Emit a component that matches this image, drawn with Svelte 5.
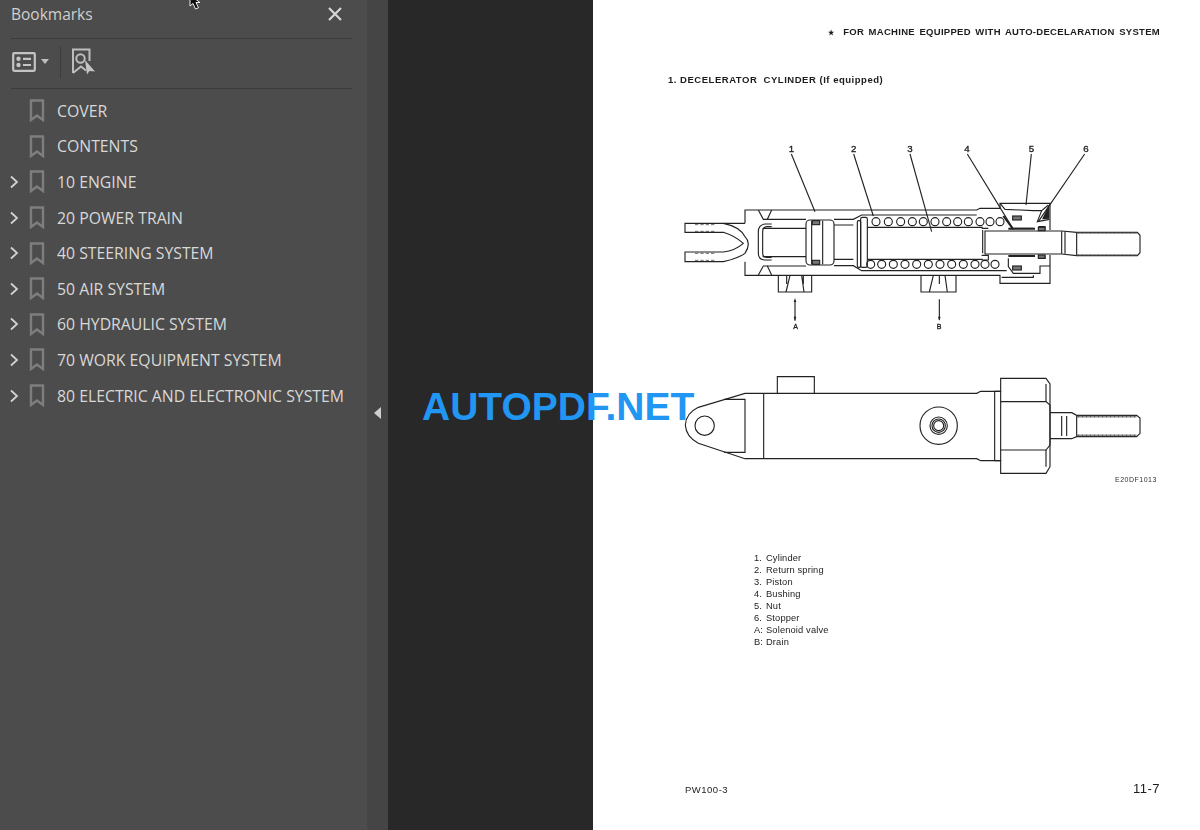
<script lang="ts">
	const bookmarks = [
		{ label: 'COVER', kids: false },
		{ label: 'CONTENTS', kids: false },
		{ label: '10 ENGINE', kids: true },
		{ label: '20 POWER TRAIN', kids: true },
		{ label: '40 STEERING SYSTEM', kids: true },
		{ label: '50 AIR SYSTEM', kids: true },
		{ label: '60 HYDRAULIC SYSTEM', kids: true },
		{ label: '70 WORK EQUIPMENT SYSTEM', kids: true },
		{ label: '80 ELECTRIC AND ELECTRONIC SYSTEM', kids: true }
	];

	const legend = [
		['1.', 'Cylinder'],
		['2.', 'Return spring'],
		['3.', 'Piston'],
		['4.', 'Bushing'],
		['5.', 'Nut'],
		['6.', 'Stopper'],
		['A:', 'Solenoid valve'],
		['B:', 'Drain']
	];

	// spring coils, in the drawing's own units (3 per screen pixel)
	const topCoils = [648, 685, 722, 757, 790, 825, 860, 893, 925, 960, 990, 1020];
	const bottomCoils = [632, 665, 700, 735, 770, 805, 840, 875, 910, 945, 975, 1005];

	const leaders = [
		{ n: '1', tx: 386, x1: 394, x2: 465, y2: 245 },
		{ n: '2', tx: 573, x1: 581, x2: 640, y2: 258 },
		{ n: '3', tx: 742, x1: 750, x2: 815, y2: 305 },
		{ n: '4', tx: 913, x1: 922, x2: 1060, y2: 298 },
		{ n: '5', tx: 1106, x1: 1114, x2: 1098, y2: 225 },
		{ n: '6', tx: 1270, x1: 1274, x2: 1135, y2: 275 }
	];
</script>

<div class="viewer">
	<aside class="panel">
		<header class="panel-head">
			<span class="panel-title">Bookmarks</span>
			<svg class="close" width="16" height="16" viewBox="0 0 16 16" aria-label="Close">
				<path d="M2 2 14 14M14 2 2 14" />
			</svg>
		</header>

		<div class="tools">
			<svg class="options" width="24" height="20" viewBox="0 0 24 20">
				<rect x="1.200" y="1.200" width="21.600" height="17.600" rx="1" />
				<circle cx="6.500" cy="6.800" r="2.200" class="fill" />
				<circle cx="6.500" cy="13" r="2.200" class="fill" />
				<path d="M11 6.800h8M11 13h8" />
			</svg>
			<span class="caret"></span>
			<span class="tool-sep"></span>
			<svg class="new-mark" width="26" height="28" viewBox="0 0 26 28">
				<path d="M2 25V1.500h16.500V13" />
				<path d="M2 25l8-6.500 5 4" />
				<circle cx="9.500" cy="10.500" r="4.200" />
				<path class="fill" d="M14 12 24 23.500 18.500 23 16 26.500z" />
			</svg>
		</div>

		<ul class="tree">
			{#each bookmarks as b}
				<li>
					<span class="twist">
						{#if b.kids}
							<svg width="10" height="14" viewBox="0 0 10 14"><path d="M2 1.500 8 7l-6 5.500" /></svg>
						{/if}
					</span>
					<svg class="mark" width="16" height="23" viewBox="0 0 16 23">
						<path d="M2 1.500h12v19.500l-6-4.500-6 4.500z" />
					</svg>
					<span class="label">{b.label}</span>
				</li>
			{/each}
		</ul>
	</aside>

	<div class="strip">
		<span class="collapse"></span>
	</div>

	<div class="gutter"></div>

	<main class="page">
		<p class="running"><span class="star">★</span>&nbsp; FOR MACHINE EQUIPPED WITH AUTO-DECELARATION SYSTEM</p>
		<h2 class="section">1. DECELERATOR&nbsp; CYLINDER (If equipped)</h2>

		<svg class="section-view" width="500" height="210" viewBox="0 0 1500 630">
			<g class="ink">
				{#each leaders as l}
					<path d="M{l.x1} 72 {l.x2} {l.y2}" />
					<text x={l.tx} y="66" class="callout">{l.n}</text>
				{/each}

				<!-- clevis -->
				<path d="M255 280H75V307H190Q225 318 250 340Q225 362 190 366H75V395H190Q235 385 255 370" />
				<path d="M190 280Q240 290 255 320Q275 340 255 370" />
				<path class="dash" d="M105 284H165M105 304H165M105 370H165M105 391H165" />

				<!-- body -->
				<path d="M255 280V240H950L960 235H1020V220H1170V300M1170 375V460H1020V436H255V395" />
				<path d="M1020 220L1035 238 1120 242H1145L1165 225" />
				<path d="M1145 242 1132 275 1168 268" />
				<path class="fill" d="M1168 222V266L1146 268z" />
				<path d="M1045 385V410L1060 430H1140V408H1170" />
				<path d="M1025 442H1120V436" />
				<path d="M295 240 310 268H322L335 240M295 435 310 408H322L335 435" />
				<path d="M322 268H438M522 268H580L605 255H950" />
				<path d="M322 408H438M522 407H580L605 422H950L1040 422" />

				<!-- rod and piston -->
				<path d="M335 282H315Q295 285 295 305V370Q295 390 315 390H335" />
				<path d="M335 290H320Q308 292 308 305V370Q308 382 320 382H335" />
				<path d="M308 295H438M522 285H580M308 380H438M522 388H580" />
				<rect x="438" y="270" width="84" height="135" rx="12" />
				<path d="M455 272V403M488 272V403" />
				<rect class="solid" x="457" y="272" width="22" height="12" />
				<rect class="solid" x="457" y="391" width="22" height="12" />
				<rect x="592" y="272" width="10" height="140" rx="4" />
				<rect x="602" y="262" width="20" height="150" rx="5" />
				<path d="M622 292H968M622 388H968" />

				<!-- spring -->
				{#each topCoils as x}
					<circle cx={x} cy="275" r="12" />
				{/each}
				{#each bottomCoils as x}
					<circle cx={x} cy="403" r="12" />
				{/each}

				<!-- rod end -->
				<path class="blank" d="M975 303H1205L1250 307H1432L1440 316V368L1432 377H1250L1205 372H975Z" />
				<path d="M968 300V370" />
				<path d="M1205 304V371M1215 305V371M1250 307V377" />
				<path class="hatch" d="M1250 309H1432M1250 375H1432" />
				<path d="M965 295H985M965 376H985V390H965" />

				<!-- bushing, stopper, seals -->
				<path d="M1060 295H1120M1135 290H1155V300M1135 385H1155V376" />
				<rect class="solid" x="1058" y="258" width="26" height="12" />
				<rect class="solid" x="1058" y="408" width="26" height="12" />
				<rect class="solid" x="1135" y="292" width="20" height="10" />
				<rect class="solid" x="1135" y="375" width="20" height="10" />
				<path class="heavy" d="M1030 258 1060 298M1045 296H1125M1045 378H1125" />

				<!-- ports -->
				<path d="M355 436V486H455V436M390 436 378 486M425 436 432 486M380 436V462M430 436V462" />
				<path d="M783 436V486H888V436M820 436 808 486M855 436 862 486M838 436V462" />

				<!-- arrows -->
				<path d="M405 512V572M838 508V570" />
				<path class="fill" d="M405 504l-4 12h8zM405 572l-4-12h8zM838 572l-4-12h8z" />
				<text x="400" y="598" class="callout small">A</text>
				<text x="830" y="596" class="callout small">B</text>
			</g>
		</svg>

		<svg class="outside-view" width="500" height="135" viewBox="0 0 1500 405">
			<g class="ink">
				<path d="M352 100V50H463V100" />
				<path d="M115 142 255 100H950L962 94H1022V55H1158L1170 72V320L1158 340H1022V302H962L950 296H255L115 250Q78 230 76 195Q78 160 115 142Z" />
				<path d="M192 118H255V277H192" />
				<circle cx="134" cy="197" r="29" />
				<path d="M311 100V296" />
				<path d="M1004 94V302M1022 94V302M1004 94H1022M1004 302H1022" />
				<path d="M1022 125H1158L1170 135V255L1158 270H1022" />
				<path d="M1158 72V125M1158 270V320" />
				<circle cx="836" cy="197" r="56" />
				<circle cx="836" cy="197" r="26" />
				<circle cx="836" cy="197" r="20" />
				<circle cx="836" cy="197" r="15" />
				<path d="M1170 158H1235L1250 166H1430L1440 174V220L1430 230H1250L1235 236H1170" />
				<path d="M1205 168V228M1220 168V228M1250 166V230" />
				<path class="hatch" d="M1250 170H1430M1250 226H1430" />
				<text x="1365" y="366" class="code">E20DF1013</text>
			</g>
		</svg>

		<ol class="legend">
			{#each legend as [k, v]}
				<li><span class="key">{k}</span>{v}</li>
			{/each}
		</ol>

		<footer class="foot">
			<span class="model">PW100-3</span>
			<span class="num">11-7</span>
		</footer>
	</main>

	<span class="watermark">AUTOPDF.NET</span>

	<svg class="pointer" width="18" height="12" viewBox="0 0 18 12">
		<path d="M1 -6 1 5 4 2.500 6.500 8 9.500 6.800 7 1.500 11 1.500z" transform="translate(2 1)" />
	</svg>
</div>

<style>
	:global(body) {
		background: #282828;
	}

	.viewer {
		position: relative;
		display: flex;
		width: 1200px;
		height: 830px;
		overflow: hidden;
		font-family: 'Open Sans', 'Noto Sans', sans-serif;
	}

	.panel {
		width: 367px;
		background: #4c4c4c;
		padding: 0 15px 0 11px;
		box-sizing: border-box;
		flex: none;
	}

	.panel-head {
		display: flex;
		align-items: center;
		justify-content: space-between;
		height: 39px;
		padding-bottom: 10px;
		box-sizing: border-box;
		border-bottom: 1px solid #3b3b3b;
	}

	.panel-title {
		font-size: 15.500px;
		color: #cfcfcf;
	}

	.close {
		margin-right: 9px;
		margin-top: -1px;
	}

	.close path {
		stroke: #d6d6d6;
		stroke-width: 2.200;
		fill: none;
	}

	.tools {
		display: flex;
		align-items: center;
		height: 45px;
		padding-bottom: 4px;
		border-bottom: 1px solid #3b3b3b;
	}

	.options {
		margin-left: 1px;
	}

	.options rect,
	.options path {
		fill: none;
		stroke: #c4c4c4;
		stroke-width: 2.200;
	}

	.options .fill,
	.new-mark .fill {
		fill: #c4c4c4;
		stroke: none;
	}

	.caret {
		width: 0;
		height: 0;
		margin-left: 5px;
		border-left: 4px solid transparent;
		border-right: 4px solid transparent;
		border-top: 5px solid #bdbdbd;
	}

	.tool-sep {
		width: 1px;
		height: 32px;
		margin: 0 10px 0 11px;
		background: #3d3d3d;
	}

	.new-mark path,
	.new-mark circle {
		fill: none;
		stroke: #bdbdbd;
		stroke-width: 2;
	}

	.tree {
		list-style: none;
		margin: 4px 0 0;
		padding: 0;
	}

	.tree li {
		display: flex;
		align-items: center;
		height: 35.600px;
	}

	.twist {
		width: 10px;
		margin-left: -2px;
		flex: none;
		display: flex;
	}

	.twist path {
		fill: none;
		stroke: #d2d2d2;
		stroke-width: 1.800;
	}

	.mark {
		margin-left: 10px;
		flex: none;
	}

	.mark path {
		fill: none;
		stroke: #7e7e7e;
		stroke-width: 2.400;
	}

	.label {
		margin-left: 12px;
		font-size: 15.800px;
		color: #d8d8d8;
		white-space: nowrap;
	}

	.strip {
		width: 21px;
		flex: none;
		background: #454545;
		display: flex;
		align-items: center;
		justify-content: center;
	}

	.collapse {
		width: 0;
		height: 0;
		border-top: 6px solid transparent;
		border-bottom: 6px solid transparent;
		border-right: 7px solid #cfcfcf;
		margin-top: -4px;
	}

	.gutter {
		width: 205px;
		flex: none;
		background: #282828;
	}

	.page {
		flex: 1;
		background: #fff;
		display: flex;
		flex-direction: column;
		padding: 26px 40px 0 67px;
		box-sizing: border-box;
		color: #1c1c1c;
		font-family: 'Liberation Sans', Arial, sans-serif;
	}

	.running,
	.section {
		margin: 0;
		font-size: 9.500px;
		font-weight: 700;
		line-height: 12px;
		height: 12px;
		white-space: nowrap;
		filter: blur(0.3px);
	}

	.running {
		text-align: right;
		letter-spacing: 0.300px;
		word-spacing: 1.500px;
	}

	.star {
		font-size: 7px;
		line-height: 0;
	}

	.section {
		margin-top: 36px;
		margin-left: 8px;
		letter-spacing: 0.520px;
	}

	.section-view {
		margin-top: 44px;
		flex: none;
		display: block;
	}

	.outside-view {
		margin-top: 20px;
		flex: none;
		display: block;
	}

	.ink {
		filter: blur(0.3px);
	}

	.ink path,
	.ink circle,
	.ink rect {
		fill: none;
		stroke: #222;
		stroke-width: 3.400;
	}

	.ink .blank {
		fill: #fff;
	}

	.ink .dash {
		stroke-dasharray: 10 6;
		stroke-width: 2;
	}

	.ink .hatch {
		stroke-dasharray: 3 1;
		stroke-width: 5;
		stroke: #555;
	}

	.ink .heavy {
		stroke-width: 6;
	}

	.ink .solid {
		fill: #777;
	}

	.ink .fill {
		fill: #222;
		stroke: none;
	}

	.callout {
		font-size: 29px;
		font-family: 'Liberation Sans', Arial, sans-serif;
		fill: #222;
		stroke: #222;
		stroke-width: 1;
	}

	.callout.small {
		font-size: 21px;
	}

	.code {
		font-size: 21px;
		letter-spacing: 1.500px;
		font-family: 'Liberation Sans', Arial, sans-serif;
		fill: #333;
	}

	.legend {
		list-style: none;
		margin: 57px 0 0 94px;
		padding: 0;
		font-size: 9.300px;
		line-height: 12px;
		letter-spacing: 0.150px;
		filter: blur(0.25px);
	}

	.legend li {
		display: flex;
	}

	.key {
		width: 12px;
	}

	.foot {
		display: flex;
		justify-content: space-between;
		align-items: baseline;
		margin-top: 133px;
		margin-left: 25px;
		filter: blur(0.25px);
	}

	.model {
		font-size: 9.500px;
		letter-spacing: 0.500px;
	}

	.num {
		font-size: 13px;
		letter-spacing: 0.500px;
	}

	.watermark {
		position: absolute;
		left: 422px;
		top: 384px;
		font-family: 'Liberation Sans', Arial, sans-serif;
		font-size: 39px;
		font-weight: 700;
		line-height: 45px;
		color: #2196f3;
		white-space: nowrap;
	}

	.pointer {
		position: absolute;
		left: 187px;
		top: 0;
	}

	.pointer path {
		fill: #111;
		stroke: #eee;
		stroke-width: 1;
	}
</style>
